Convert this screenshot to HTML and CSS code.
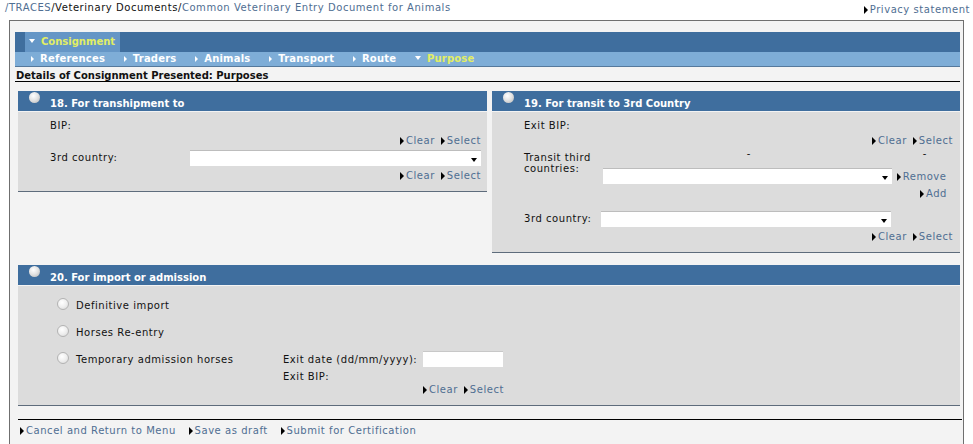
FILE: index.html
```html
<!DOCTYPE html>
<html lang="en">
<head>
<meta charset="UTF-8">
<title>Common Veterinary Entry Document for Animals</title>
<link rel="stylesheet" href="styles.css">
</head>
<body>
    <div class="topbar">
        <div class="crumbs"><a href="#">/TRACES</a>/Veterinary Documents/<a href="#">Common Veterinary Entry Document for Animals</a></div>
        <a class="go" href="#">Privacy statement</a>
    </div>

    <div class="frame">
        <div class="tabs"><span class="tab open">Consignment</span></div>
        <div class="subtabs">
            <span class="st">References</span>
            <span class="st">Traders</span>
            <span class="st">Animals</span>
            <span class="st">Transport</span>
            <span class="st">Route</span>
            <span class="st open">Purpose</span>
        </div>
        <div class="title">Details of Consignment Presented: Purposes</div>

        <div class="row">
            <div class="panel left">
                <div class="phead"><span class="radio"></span>18. For transhipment to</div>
                <div class="pbody">
                    <div class="line">BIP:</div>
                    <div class="acts"><a class="go" href="#">Clear</a><a class="go" href="#">Select</a></div>
                    <div class="combo-row">
                        <span class="lbl wide">3rd country:</span>
                        <span class="combo c291"></span>
                    </div>
                    <div class="acts after"><a class="go" href="#">Clear</a><a class="go" href="#">Select</a></div>
                </div>
            </div>

            <div class="panel right">
                <div class="phead"><span class="radio"></span>19. For transit to 3rd Country</div>
                <div class="pbody">
                    <div class="line">Exit BIP:</div>
                    <div class="acts"><a class="go" href="#">Clear</a><a class="go" href="#">Select</a></div>
                    <div class="transit">
                        <span class="lbl narrow">Transit third<br>countries:</span>
                        <div class="tlist">
                            <div class="dashes"><span class="d1">-</span><span class="d2">-</span></div>
                            <div class="tsel">
                                <span class="combo c289"></span>
                                <a class="go" href="#">Remove</a>
                            </div>
                            <div class="add"><a class="go" href="#">Add</a></div>
                        </div>
                    </div>
                    <div class="combo-row third">
                        <span class="lbl narrow2">3rd country:</span>
                        <span class="combo c290"></span>
                    </div>
                    <div class="acts after"><a class="go" href="#">Clear</a><a class="go" href="#">Select</a></div>
                </div>
            </div>
        </div>

        <div class="panel full">
            <div class="phead"><span class="radio"></span>20. For import or admission</div>
            <div class="pbody imp">
                <div class="opt"><span class="rb"></span>Definitive import</div>
                <div class="opt"><span class="rb"></span>Horses Re-entry</div>
                <div class="opt last">
                    <div class="optname"><span class="rb"></span>Temporary admission horses</div>
                    <div class="exit">
                        <div class="exitdate"><span>Exit date (dd/mm/yyyy):</span><span class="datebox"></span></div>
                        <div class="line">Exit BIP:</div>
                        <div class="acts"><a class="go" href="#">Clear</a><a class="go" href="#">Select</a></div>
                    </div>
                </div>
            </div>
        </div>

        <div class="footer">
            <a class="go" href="#">Cancel and Return to Menu</a>
            <a class="go" href="#">Save as draft</a>
            <a class="go" href="#">Submit for Certification</a>
        </div>
    </div>
</body>
</html>
```

FILE: styles.css
```css
body{
    margin: 0;
    background: #fff;
    font-family: "DejaVu Sans", Verdana, sans-serif;
    font-size: 10px;
    letter-spacing: 0.55px;
    color: #111;
}
a{
    color: #4f6e92;
    text-decoration: none;
}
.go::before{
    content: "";
    display: inline-block;
    border-left: 4px solid #000;
    border-top: 4px solid transparent;
    border-bottom: 4px solid transparent;
    margin-right: 2px;
    vertical-align: -1px;
}

.topbar{
    display: flex;
    justify-content: space-between;
    height: 20px;
    padding: 2px 3px 0 5px;
    box-sizing: border-box;
}
.topbar .go{
    margin-top: 2px;
}

.frame{
    margin-left: 9px;
    width: 955px;
    box-sizing: border-box;
    border: 1px solid #6f6f6f;
    background: #f3f3f3;
    padding: 11px 3px 40px 5px;
}

.tabs{
    height: 20px;
    background: #3f6e9e;
    padding-left: 10px;
}
.tab{
    display: inline-block;
    height: 20px;
    line-height: 20px;
    padding: 0 5px 0 4px;
    background: #6596c6;
    color: #e2ee63;
    font-weight: bold;
    letter-spacing: 0;
    white-space: nowrap;
}
.subtabs{
    height: 14px;
    line-height: 14px;
    background: #7eadd7;
    border-bottom: 1px solid #55799c;
    padding-left: 16px;
    white-space: nowrap;
}
.st{
    color: #fff;
    font-weight: bold;
    letter-spacing: 0.2px;
    margin-right: 15px;
}
.st::before{
    content: "";
    display: inline-block;
    border-left: 3px solid #fff;
    border-top: 3px solid transparent;
    border-bottom: 3px solid transparent;
    margin-right: 6px;
    vertical-align: 0;
}
.st.open{
    color: #e2ee63;
}
.tab.open::before, .st.open::before{
    content: "";
    display: inline-block;
    border-top: 4px solid #fff;
    border-bottom: 0;
    border-left: 3px solid transparent;
    border-right: 3px solid transparent;
    margin-right: 6px;
    vertical-align: 2px;
}

.title{
    font-weight: bold;
    letter-spacing: 0;
    height: 14px;
    line-height: 17px;
    border-bottom: 1px solid #000;
    padding-left: 1px;
}

.row{
    display: flex;
    align-items: flex-start;
    gap: 5px;
    margin-top: 9px;
    padding-left: 3px;
}
.panel{
    background: #dcdcdc;
    border-bottom: 1px solid #5e6c7c;
}
.panel.left{
    width: 469px;
}
.panel.right{
    width: 468px;
}
.panel.full{
    width: 942px;
    margin: 12px 0 0 3px;
}
.phead{
    height: 20px;
    line-height: 26px;
    background: #3f6e9e;
    border-bottom: 1px solid #f3f3f3;
    color: #fff;
    font-weight: bold;
    letter-spacing: 0;
    padding-left: 11px;
    overflow: hidden;
}
.radio{
    display: inline-block;
    width: 11px;
    height: 11px;
    border-radius: 50%;
    background: radial-gradient(circle at 40% 35%, #fff 0, #e4e4e4 45%, #b4b4b4 100%);
    margin-right: 10px;
    vertical-align: 4px;
}
.pbody{
    padding: 7px 6px 8px 32px;
}
.panel.right .pbody{
    padding-right: 7px;
}
.line{
    height: 14px;
    line-height: 14px;
}
.acts{
    height: 15px;
    line-height: 15px;
    text-align: right;
}
.acts.after{
    margin-top: 2px;
}
.acts .go + .go{
    margin-left: 6px;
}
.combo-row{
    display: flex;
    align-items: center;
    height: 17px;
    margin-top: 1px;
}
.lbl.wide{
    width: 140px;
}
.lbl.narrow{
    width: 79px;
    line-height: 11px;
    padding-top: 1px;
}
.lbl.narrow2{
    width: 77px;
}
.combo{
    display: inline-block;
    height: 15px;
    background: #fff;
    border-top: 1px solid #bdbdbd;
    position: relative;
}
.combo::after{
    content: "";
    position: absolute;
    right: 4px;
    top: 7px;
    border-top: 4px solid #000;
    border-left: 3px solid transparent;
    border-right: 3px solid transparent;
}
.c291{ width: 291px; }
.c289{ width: 289px; }
.c290{ width: 290px; }

.transit{
    display: flex;
    margin-top: 3px;
}
.tlist{
    width: 352px;
}
.dashes{
    height: 17px;
    line-height: 6px;
}
.d1{
    margin-left: 144px;
}
.d2{
    margin-left: 172px;
}
.tsel{
    display: flex;
    align-items: center;
    gap: 5px;
}
.add{
    text-align: right;
    padding-right: 6px;
    height: 17px;
    line-height: 19px;
}
.combo-row.third{
    margin-top: 9px;
}

.pbody.imp{
    padding: 12px 6px 8px 39px;
}
.opt{
    height: 27px;
    line-height: 12px;
}
.opt.last{
    display: flex;
    height: auto;
}
.optname{
    width: 226px;
}
.rb{
    display: inline-block;
    width: 10px;
    height: 10px;
    border-radius: 50%;
    border: 1px solid #b3b3b3;
    background: radial-gradient(circle at 40% 35%, #fff 0, #efefef 50%, #d6d6d6 100%);
    margin-right: 7px;
    vertical-align: -1px;
}
.exit{
    width: 221px;
}
.exitdate{
    display: flex;
    align-items: flex-start;
    height: 17px;
    line-height: 12px;
    margin-top: 2px;
}
.datebox{
    width: 80px;
    height: 16px;
    background: #fff;
    border-top: 1px solid #c8c8c8;
    margin: -3px 0 0 6px;
    box-sizing: border-box;
}
.exit .line{
    height: 12px;
    line-height: 12px;
}
.exit .acts{
    height: 14px;
    line-height: 14px;
}

.footer{
    margin: 13px 0 0 3px;
    width: 942px;
    border-top: 1px solid #000;
    padding: 4px 0 0 2px;
    line-height: 14px;
}
.footer .go{
    margin-right: 9px;
}
```
